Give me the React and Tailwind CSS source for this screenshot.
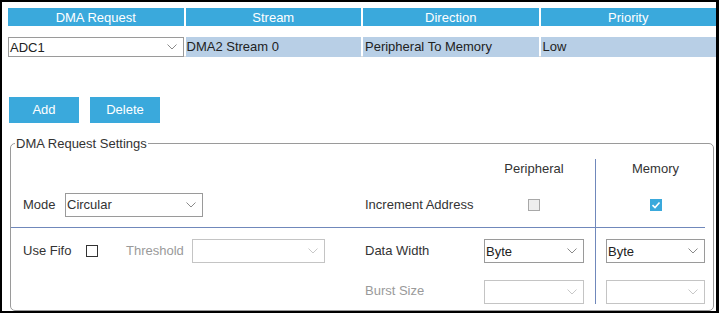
import React from "react";

const Chevron = ({ color = "#8a8a8a" }) => (
  <svg width="10" height="6" viewBox="0 0 10 6" className="block">
    <polyline points="0.5,0.5 5,5 9.5,0.5" fill="none" stroke={color} strokeWidth="1" />
  </svg>
);

function Select({ text, className, disabled }) {
  return (
    <div
      className={
        "flex items-center justify-between bg-white border pl-[1px] pr-[6px] " +
        (disabled ? "border-[#c4c4c4] " : "border-[#9a9a9a] ") +
        className
      }
    >
      <span className="leading-none">{text}</span>
      <Chevron color={disabled ? "#c8c8c8" : "#8a8a8a"} />
    </div>
  );
}

const Check = ({ variant }) => {
  if (variant === "checked")
    return (
      <div className="w-[12px] h-[12px] bg-[#3aa9dc] flex items-center justify-center">
        <svg width="10" height="10" viewBox="0 0 10 10">
          <polyline points="1.5,5.2 4,7.5 8.5,2.5" fill="none" stroke="#fff" strokeWidth="1.6" />
        </svg>
      </div>
    );
  if (variant === "disabled")
    return <div className="w-[12px] h-[12px] bg-[#eeeeee] border border-[#a8a8a8]" />;
  return <div className="w-[12px] h-[12px] bg-white border border-[#333]" />;
};

export default function App() {
  return (
    <div className="w-[719px] h-[313px] bg-black pt-[2px] pl-[2px] pr-[3px] pb-[2px]">
      <div className="w-full h-full bg-white pl-[6px] pt-[6px] overflow-hidden font-['Liberation_Sans',Arial,sans-serif] text-[13px] text-[#333]">
        <div className="w-[708px]">
          <div className="grid grid-cols-4 gap-x-[2px] h-[18px]">
            {["DMA Request", "Stream", "Direction", "Priority"].map((h) => (
              <div key={h} className="bg-[#3aa9dc] text-white flex items-center justify-center leading-none">
                {h}
              </div>
            ))}
          </div>
          <div className="grid grid-cols-4 gap-x-[2px] h-[20px] mt-[11px] bg-white border-b border-[#dcdcdc]">
            <Select text="ADC1" className="h-[20px] pr-[4px] text-[#222]" />
            <div className="bg-[#b8cfe6] flex items-center pl-[1px] text-[#222]">DMA2 Stream 0</div>
            <div className="bg-[#b8cfe6] flex items-center pl-[2px] text-[#222]">Peripheral To Memory</div>
            <div className="bg-[#b8cfe6] flex items-center pl-[2px] text-[#222]">Low</div>
          </div>
          <div className="flex gap-[11px] ml-[1px] mt-[40px]">
            <div className="w-[70px] h-[26px] bg-[#3aa9dc] text-white flex items-center justify-center">Add</div>
            <div className="w-[70px] h-[26px] bg-[#3aa9dc] text-white flex items-center justify-center">Delete</div>
          </div>
          <fieldset className="ml-[2px] mt-[13px] w-[704px] h-[175px] border border-[#9a9a9a] rounded-[5px]">
            <legend className="ml-[4px] px-[1px] leading-[15px] text-[#333]">DMA Request Settings</legend>
            <div className="w-[694px] mt-[8px]">
              <div className="flex h-[18px]">
                <div className="w-[348px]" />
                <div className="w-[125px]" />
                <div className="w-[111px] flex items-center">
                  <div className="w-[100px] text-center leading-[15px]">Peripheral</div>
                </div>
                <div className="w-[110px] border-l border-[#7088bb] pl-[10px] flex items-center">
                  <div className="w-[100px] text-center leading-[15px]">Memory</div>
                </div>
              </div>
              <div className="flex h-[51px] border-b border-[#7088bb]">
                <div className="w-[348px] pl-[12px] pt-[5px] flex items-center">
                  <span className="w-[42px]">Mode</span>
                  <Select text="Circular" className="w-[138px] h-[24px]" />
                </div>
                <div className="w-[125px] pl-[6px] pt-[5px] flex items-center">Increment Address</div>
                <div className="w-[111px] pt-[5px] flex items-center">
                  <div className="w-[100px] flex justify-center">
                    <Check variant="disabled" />
                  </div>
                </div>
                <div className="w-[110px] border-l border-[#7088bb] pl-[10px] pt-[5px] flex items-center">
                  <div className="w-[100px] flex justify-center">
                    <Check variant="checked" />
                  </div>
                </div>
              </div>
              <div className="flex h-[46px]">
                <div className="w-[348px] pl-[12px] flex items-center">
                  <span className="w-[63px]">Use Fifo</span>
                  <Check />
                  <span className="ml-[28px] w-[66px] text-[#9a9a9a]">Threshold</span>
                  <Select text="" disabled className="w-[133px] h-[24px]" />
                </div>
                <div className="w-[125px] pl-[6px] flex items-center">Data Width</div>
                <div className="w-[111px] flex items-center">
                  <Select text="Byte" className="w-[100px] h-[24px] text-[#222]" />
                </div>
                <div className="w-[110px] border-l border-[#7088bb] pl-[10px] flex items-center">
                  <Select text="Byte" className="w-[100px] h-[24px] text-[#222]" />
                </div>
              </div>
              <div className="flex h-[30px]">
                <div className="w-[348px]" />
                <div className="w-[125px] pl-[6px] flex items-end pb-[4px] text-[#9a9a9a]">Burst Size</div>
                <div className="w-[111px] flex items-end">
                  <Select text="" disabled className="w-[100px] h-[24px]" />
                </div>
                <div className="w-[110px] border-l border-[#7088bb] pl-[10px] flex items-end">
                  <Select text="" disabled className="w-[100px] h-[24px]" />
                </div>
              </div>
            </div>
          </fieldset>
        </div>
      </div>
    </div>
  );
}
